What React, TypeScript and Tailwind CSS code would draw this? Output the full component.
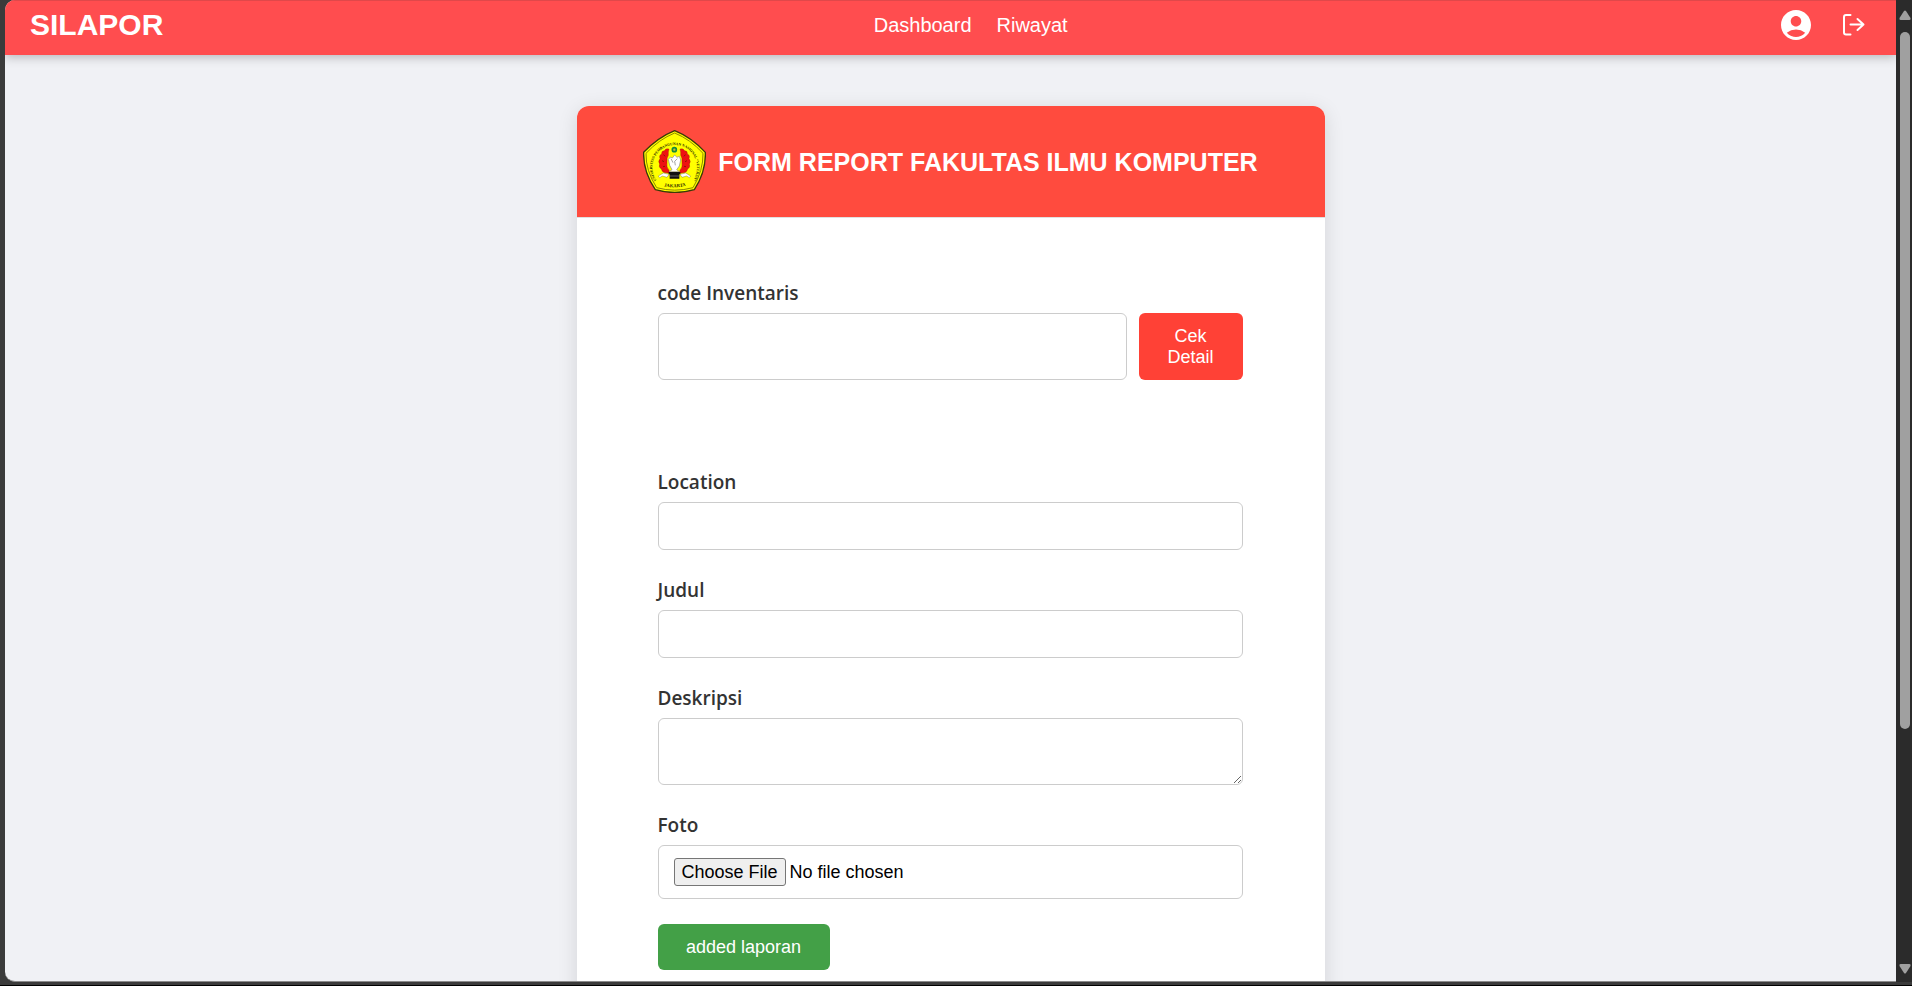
import type { ReactNode } from "react";
import { MdAccountCircle } from "react-icons/md";

const inputClass =
  "block w-full rounded-[6px] border border-[#cccccc] bg-white px-[15px] text-lg text-black";

function CampusLogo() {
  return (
    <svg
      viewBox="0 0 189 189"
      className="size-[63px] shrink-0"
      role="img"
      aria-label="Logo UPN Veteran Jakarta"
    >
      <defs>
        <path id="ring-top" d="M42 153 A67 67 0 1 1 148 153" />
        <path id="ring-bottom" d="M52 167 Q95 178 140 165" />
      </defs>
      <path
        d="M95 2 Q145 22 187 67 Q189 125 154 179 Q95 196 37 179 Q0 125 2 67 Q45 22 95 2Z"
        fill="#ffff00"
        stroke="#3c3a08"
        strokeWidth="4"
        strokeLinejoin="round"
      />
      <path
        d="M95 9 Q142 28 180 70 Q181 122 150 173 Q95 188 41 173 Q8 122 9 70 Q48 28 95 9Z"
        fill="none"
        stroke="#8c8800"
        strokeWidth="3"
      />
      <g
        fill="#1c1c00"
        fontFamily="'Liberation Serif', serif"
        fontWeight="700"
      >
        <text fontSize="11">
          <textPath href="#ring-top" startOffset="50%" textAnchor="middle">
            UNIVERSITAS PEMBANGUNAN NASIONAL “VETERAN”
          </textPath>
        </text>
        <text fontSize="14">
          <textPath href="#ring-bottom" startOffset="50%" textAnchor="middle">
            JAKARTA
          </textPath>
        </text>
      </g>
      {/* Wreath */}
      <g fill="#ee1111" stroke="#8a1a00" strokeWidth="1">
        <path d="M78 57 Q68 54 64 62 Q55 62 56 72 Q47 76 51 86 Q44 94 50 102 Q46 112 55 117 Q57 128 68 128 L80 130 L78 120 Q70 112 72 98 Q70 84 76 76 Q75 66 78 57Z" />
        <path d="M111 57 Q121 54 125 62 Q134 62 133 72 Q142 76 138 86 Q145 94 139 102 Q143 112 134 117 Q132 128 121 128 L109 130 L111 120 Q119 112 117 98 Q119 84 113 76 Q114 66 111 57Z" />
      </g>
      <path
        d="M62 74l4 5M57 92l6 3M60 110l6-1M127 74l-4 5M132 92l-6 3M129 110l-6-1"
        fill="none"
        stroke="#8a1a00"
        strokeWidth="3"
      />
      <circle
        cx="94"
        cy="59"
        r="6"
        fill="#c9b83a"
        stroke="#138a3c"
        strokeWidth="5"
      />
      {/* Lotus, pedestal and ribbon */}
      <path
        d="M95 75 L102 82 L109 79 L113 90 L109 108 L101 119 L109 125 L79 125 L87 119 L80 106 L76 88 L83 81 L88 84Z"
        fill="#ffffff"
        stroke="#888888"
        strokeWidth="2"
      />
      <path
        d="M103 86 L95 94 L97 106 M84 86 L90 98"
        fill="none"
        stroke="#777777"
        strokeWidth="2"
      />
      <path
        d="M46 138 L61 129 L78 133 L72 142 L58 138 L50 143Z M143 138 L128 129 L111 133 L117 142 L131 138 L139 143Z"
        fill="#ffffff"
        stroke="#444444"
        strokeWidth="1"
      />
      <path d="M77 126 H112 V133 H109 V146 H80 V133 H77Z" fill="#111111" />
      <path d="M80 138 H109" stroke="#888888" strokeWidth="2" />
    </svg>
  );
}

function LogoutIcon() {
  return (
    <svg
      width="22"
      height="22"
      viewBox="0 0 22 22"
      fill="none"
      stroke="currentColor"
      strokeWidth="2"
      strokeLinecap="round"
      strokeLinejoin="round"
      aria-hidden="true"
    >
      <path d="M7.5 1H3a2 2 0 0 0-2 2v15.500a2 2 0 0 0 2 2h4.500" />
      <path d="M7.500 10.500H20.500M14.500 5l6 5.500-6 5.500" />
    </svg>
  );
}

function Navbar() {
  return (
    <header className="relative z-10 flex h-[55px] shrink-0 items-start justify-between border-t border-[#e0484a] bg-[#ff4d4f] px-[25px] pt-[6px] text-white shadow-[0_2px_10px_rgba(0,0,0,0.25)]">
      <a href="#" className="text-[30px] font-bold leading-9">
        SILAPOR
      </a>
      <nav className="flex gap-[25px] text-xl leading-9">
        <a href="#dashboard">Dashboard</a>
        <a href="#riwayat">Riwayat</a>
      </nav>
      <div className="flex items-center gap-[29px] pr-1">
        <button type="button" aria-label="Profil">
          <MdAccountCircle className="size-9" />
        </button>
        <button type="button" aria-label="Keluar" className="pr-[2px]">
          <LogoutIcon />
        </button>
      </div>
    </header>
  );
}

interface FieldProps {
  id: string;
  label: string;
  children: ReactNode;
}

function Field({ id, label, children }: FieldProps) {
  return (
    <div className="mb-[25px]">
      <label
        htmlFor={id}
        className="mb-1 block font-['Open_Sans','Noto_Sans',sans-serif] text-[19px] leading-[31px] font-semibold text-[#333333]"
      >
        {label}
      </label>
      {children}
    </div>
  );
}

function ReportForm() {
  return (
    <form
      className="py-[60px] pl-[81px] pr-[82px]"
      onSubmit={(e) => e.preventDefault()}
    >
      <Field id="code" label="code Inventaris">
        <div className="flex gap-3">
          <input
            id="code"
            type="text"
            className={`${inputClass} h-[67px] min-w-0 flex-1`}
          />
          <button
            type="button"
            className="w-[104px] rounded-[6px] bg-[#ff4136] px-6 text-lg leading-[21px] text-white"
          >
            Cek Detail
          </button>
        </div>
      </Field>

      <div className="min-h-[62px]" />

      <Field id="location" label="Location">
        <input id="location" type="text" className={`${inputClass} h-12`} />
      </Field>
      <Field id="judul" label="Judul">
        <input id="judul" type="text" className={`${inputClass} h-12`} />
      </Field>
      <Field id="deskripsi" label="Deskripsi">
        <textarea
          id="deskripsi"
          className={`${inputClass} h-[67px] resize-y py-3`}
        />
      </Field>
      <Field id="foto" label="Foto">
        <input
          id="foto"
          type="file"
          className={`${inputClass} h-[54px] py-3 file:h-7 file:rounded-[3px] file:border file:border-solid file:border-[#767676] file:bg-[#efefef] file:px-[7px] file:leading-6`}
        />
      </Field>

      <button
        type="submit"
        className="h-[46px] w-[172px] rounded-[6px] bg-[#43a047] text-lg text-white"
      >
        added laporan
      </button>
    </form>
  );
}

function Scrollbar() {
  return (
    <div
      className="flex w-4 shrink-0 flex-col items-center bg-[#2b2b2b] pb-2 pl-px pt-[10px]"
      aria-hidden="true"
    >
      <svg width="12" height="10" viewBox="0 0 12 10" fill="#a0a0a0">
        <path d="M5 1Q6 0 7 1L11.500 8Q12 10 10.500 10H1.500Q0 10 .5 8Z" />
      </svg>
      <div className="mt-3 w-[10px] grow-[74] basis-0 rounded-full bg-[#a0a0a0]" />
      <div className="grow-[25] basis-0" />
      <svg width="12" height="10" viewBox="0 0 12 10" fill="#a0a0a0">
        <path d="M5 9Q6 10 7 9L11.500 2Q12 0 10.500 0H1.500Q0 0 .5 2Z" />
      </svg>
    </div>
  );
}

export default function App() {
  return (
    <div className="flex h-screen flex-col overflow-hidden border-b border-black bg-[#3b3b3b] pb-[3px] pl-[5px] font-['Liberation_Sans',Arial,sans-serif]">
      <div className="flex min-h-0 flex-1">
        <div className="flex min-w-0 flex-1 flex-col overflow-hidden rounded-l-[10px] border-b border-[#8a8a8a] bg-[#f0f1f5]">
          <Navbar />
          <main className="min-h-0 flex-1 overflow-hidden pt-[51px]">
            <section className="mx-auto w-full max-w-[748px] overflow-hidden rounded-t-[12px] bg-white shadow-[0_4px_20px_rgba(0,0,0,0.12)]">
              <div className="flex items-center justify-center gap-3 border-b border-[#e0e0e0] bg-[#ff4b3e] py-6">
                <CampusLogo />
                <h1 className="text-[25px] font-bold leading-8 text-white">
                  FORM REPORT FAKULTAS ILMU KOMPUTER
                </h1>
              </div>
              <ReportForm />
            </section>
          </main>
        </div>
        <Scrollbar />
      </div>
    </div>
  );
}
